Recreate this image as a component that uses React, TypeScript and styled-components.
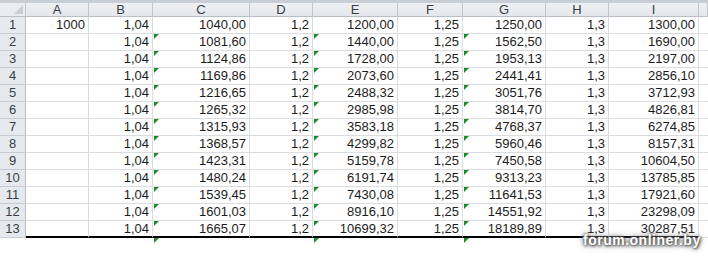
import styled, { createGlobalStyle } from "styled-components";

const GlobalStyle = createGlobalStyle`
  body {
    margin: 0;
    background: #ffffff;
    font-family: "Liberation Sans", Arial, sans-serif;
  }
`;

const COLS = "26px 63px 64px 97px 63px 85px 65px 83px 63px 90px 1fr";
const LETTERS = ["A", "B", "C", "D", "E", "F", "G", "H", "I", ""];

const rows: string[][] = [
  ["1000", "1,04", "1040,00", "1,2", "1200,00", "1,25", "1250,00", "1,3", "1300,00"],
  ["", "1,04", "1081,60", "1,2", "1440,00", "1,25", "1562,50", "1,3", "1690,00"],
  ["", "1,04", "1124,86", "1,2", "1728,00", "1,25", "1953,13", "1,3", "2197,00"],
  ["", "1,04", "1169,86", "1,2", "2073,60", "1,25", "2441,41", "1,3", "2856,10"],
  ["", "1,04", "1216,65", "1,2", "2488,32", "1,25", "3051,76", "1,3", "3712,93"],
  ["", "1,04", "1265,32", "1,2", "2985,98", "1,25", "3814,70", "1,3", "4826,81"],
  ["", "1,04", "1315,93", "1,2", "3583,18", "1,25", "4768,37", "1,3", "6274,85"],
  ["", "1,04", "1368,57", "1,2", "4299,82", "1,25", "5960,46", "1,3", "8157,31"],
  ["", "1,04", "1423,31", "1,2", "5159,78", "1,25", "7450,58", "1,3", "10604,50"],
  ["", "1,04", "1480,24", "1,2", "6191,74", "1,25", "9313,23", "1,3", "13785,85"],
  ["", "1,04", "1539,45", "1,2", "7430,08", "1,25", "11641,53", "1,3", "17921,60"],
  ["", "1,04", "1601,03", "1,2", "8916,10", "1,25", "14551,92", "1,3", "23298,09"],
  ["", "1,04", "1665,07", "1,2", "10699,32", "1,25", "18189,89", "1,3", "30287,51"],
];

// columns C, E, G carry the green error marker
const MARKED = [2, 4, 6];

const App = () => {
  return (
    <Sheet>
      <GlobalStyle />
      <TopBand />
      <Row $head>
        <Corner>
          <svg width="9" height="9" viewBox="0 0 9 9">
            <polygon points="9,0 9,9 0,9" fill="#c9ced4" />
          </svg>
        </Corner>
        {LETTERS.map((l, i) => (
          <ColHead key={i}>{l}</ColHead>
        ))}
      </Row>
      {rows.map((r, ri) => {
        const last = ri === rows.length - 1;
        return (
          <Row key={ri}>
            <RowHead>{ri + 1}</RowHead>
            {r.map((v, ci) => (
              <Cell key={ci} $last={last}>
                {ri > 0 && MARKED.includes(ci) && <Marker />}
                {v}
              </Cell>
            ))}
            <Cell $edge />
          </Row>
        );
      })}
      <Tail>
        <span />
        {Array.from({ length: 10 }).map((_, ci) => (
          <TailCell key={ci}>{MARKED.includes(ci) && <Marker />}</TailCell>
        ))}
      </Tail>
      <Watermark>forum.onliner.by</Watermark>
    </Sheet>
  );
};

const Sheet = styled.div`
  position: relative;
  width: 708px;
  height: 262px;
  overflow: hidden;
  background: #ffffff;
  font-size: 13px;
  color: #1c1c1c;
`;

const TopBand = styled.div`
  height: 3px;
  background: #c9ced5;
`;

const Row = styled.div<{ $head?: boolean }>`
  display: grid;
  grid-template-columns: ${COLS};
  height: ${({ $head }) => ($head ? "14px" : "17px")};
  line-height: ${({ $head }) => ($head ? "13px" : "16px")};
`;

const Corner = styled.div`
  display: flex;
  align-items: flex-end;
  justify-content: flex-end;
  padding: 0 2px 2px 0;
  background: #e9ecf0;
  border-right: 1px solid #c3c8ce;
  border-bottom: 1px solid #b9bfc6;
  box-sizing: border-box;
`;

const ColHead = styled.div`
  background: linear-gradient(#eef0f3, #e4e8ec);
  border-right: 1px solid #c3c8ce;
  border-bottom: 1px solid #b9bfc6;
  box-sizing: border-box;
  text-align: center;
  color: #3b3f44;
`;

const RowHead = styled.div`
  background: #e6e9ed;
  border-right: 1px solid #b9bfc6;
  border-bottom: 1px solid #c8ccd2;
  box-sizing: border-box;
  text-align: center;
  color: #3b3f44;
`;

const Cell = styled.div<{ $last?: boolean; $edge?: boolean }>`
  position: relative;
  box-sizing: border-box;
  border-right: ${({ $edge }) => ($edge ? "none" : "1px solid #dadcdf")};
  border-bottom: ${({ $last }) => ($last ? "2px solid #000" : "1px solid #dadcdf")};
  line-height: ${({ $last }) => ($last ? "15px" : "16px")};
  text-align: right;
  padding-right: 3px;
  white-space: nowrap;
`;

const Marker = styled.span`
  position: absolute;
  left: 1px;
  top: 0;
  width: 0;
  height: 0;
  border-top: 5px solid #1f8a2a;
  border-right: 5px solid transparent;
`;

const Tail = styled.div`
  display: grid;
  grid-template-columns: ${COLS};
  height: 22px;
`;

const TailCell = styled.div`
  position: relative;
`;

const Watermark = styled.div`
  position: absolute;
  left: 583px;
  top: 232px;
  font-weight: bold;
  font-size: 14px;
  color: #ffffff;
  letter-spacing: 0.5px;
  text-shadow: 0 0 2px #555, 0 0 4px #666, 1px 1px 3px #444, 0 0 8px #999;
`;

export default App;
